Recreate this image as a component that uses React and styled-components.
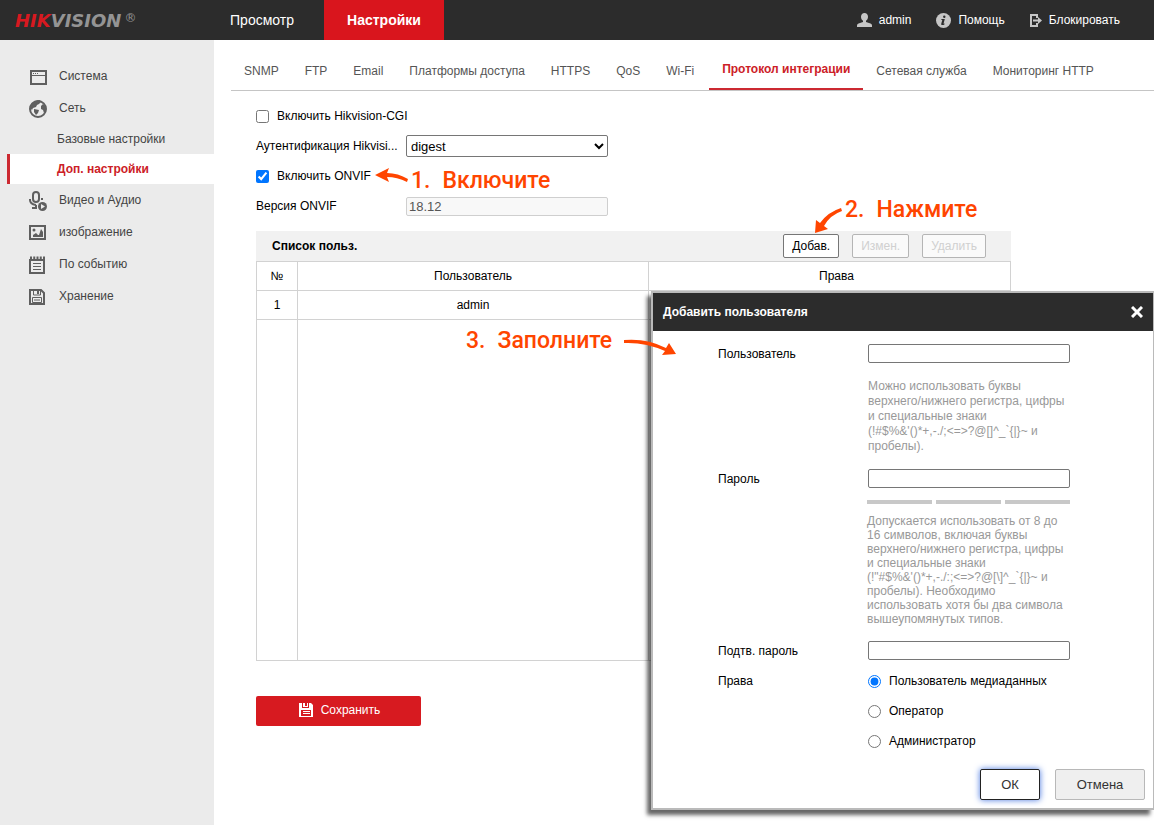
import React, { useState } from 'react'
import styled, { createGlobalStyle } from 'styled-components'

const GlobalStyle = createGlobalStyle`
    * {
        box-sizing: border-box;
    }
    body {
        margin: 0;
        background-color: white;
        color: black;
        font-family: "Liberation Sans", Arial, sans-serif;
        font-size: 12px;
    }
    a {
        color: inherit;
        text-decoration: none;
    }
    button, input, select {
        font-family: inherit;
        margin: 0;
    }
`

const Page = styled.div`
    position: relative;
    min-height: 100vh;
    display: flex;
    flex-direction: column;
    overflow: hidden;
`
const Header = styled.header`
    display: flex;
    height: 40px;
    background-color: #2c2c2c;
    color: white;
`
const Logo = styled.a`
    display: flex;
    align-items: center;
    width: 200px;
    padding-left: 15px;
    font-family: "DejaVu Sans", sans-serif;
    font-size: 18px;
    font-weight: bold;
    font-style: italic;
    color: #949494;
`
const LogoRed = styled.span`
    color: #d71920;
`
const LogoMark = styled.span`
    margin: 0 0 4px 3px;
    font-size: 12px;
    font-weight: normal;
    font-style: normal;
`
const MainNav = styled.nav`
    display: flex;
    flex: 1;
`
const MainLink = styled.a`
    display: flex;
    align-items: center;
    justify-content: center;
    width: ${props => props.$active ? '120px' : '124px'};
    font-size: 14px;
    font-weight: ${props => props.$active ? 'bold' : 'normal'};
    background-color: ${props => props.$active ? '#d9151d' : 'transparent'};
`
const UserLinks = styled.div`
    display: flex;
    align-items: center;
    gap: 25px;
    padding-right: 34px;
`
const UserLink = styled.a`
    display: flex;
    align-items: center;
    gap: 7px;
`
const Columns = styled.div`
    display: flex;
    flex: 1;
`
const Sidebar = styled.nav`
    flex: 0 0 214px;
    padding-top: 20px;
    background-color: #ebebeb;
    color: #444;
`
const SideLink = styled.a`
    display: flex;
    align-items: center;
    gap: 12px;
    height: 32px;
    padding-left: 29px;
`
const SubLink = styled.a`
    display: flex;
    align-items: center;
    height: 30px;
    margin-left: 7px;
    padding-left: 47px;
    border-left: 3px solid ${props => props.$active ? '#cc2931' : 'transparent'};
    background-color: ${props => props.$active ? 'white' : 'transparent'};
    color: ${props => props.$active ? '#cc2027' : 'inherit'};
    font-weight: ${props => props.$active ? 'bold' : 'normal'};
`
const Content = styled.main`
    flex: 1;
    min-width: 0;
    padding-left: 17px;
`
const Tabs = styled.nav`
    display: flex;
    height: 51px;
    border-bottom: 1px solid #c5c5c5;
    color: #555;
    white-space: nowrap;
`
const Tab = styled.a`
    display: flex;
    align-items: center;
    margin-left: ${props => props.$active ? '2px' : '0'};
    padding: ${props => props.$active ? '10px' : '12px'} 13px 0 13px;
    border-bottom: ${props => props.$active ? '2px solid #cc2931' : 'none'};
    color: ${props => props.$active ? '#cc2027' : 'inherit'};
    font-weight: ${props => props.$active ? 'bold' : 'normal'};
`
const Panel = styled.div`
    max-width: 780px;
    padding: 10px 0 0 25px;
`
const FormRow = styled.div`
    display: flex;
    align-items: center;
    height: 30px;
`
const CheckLabel = styled.label`
    display: flex;
    align-items: center;
    gap: 8px;
`
const Check = styled.input`
    width: 13px;
    height: 13px;
`
const FieldLabel = styled.label`
    width: 150px;
    white-space: nowrap;
`
const Select = styled.select`
    width: 202px;
    height: 22px;
    border: 1px solid #767676;
    border-radius: 2px;
    background-color: white;
    font-size: 13px;
`
const TextInput = styled.input`
    width: 202px;
    height: 19px;
    padding: 0 2px;
    border: 1px solid #767676;
    border-radius: 2px;
    font-size: 13px;

    &:disabled{
        border-color: #cfcfcf;
        background-color: #f8f8f8;
        color: #555;
    }
`
const ListHeader = styled.div`
    display: flex;
    align-items: center;
    height: 30px;
    margin-top: 10px;
    padding: 0 25px 0 16px;
    background-color: #f1f1f1;
`
const ListTitle = styled.h2`
    flex: 1;
    margin: 0;
    font-size: 12px;
`
const ListButton = styled.button`
    height: 24px;
    margin-left: 13px;
    padding: 0 8px;
    border: 1px solid #767676;
    border-radius: 2px;
    background-color: white;
    color: black;
    font-size: 12px;

    &:disabled{
        border-color: #b5b5b5;
        background-color: #fafafa;
        color: #d0d0d0;
    }
`
const Table = styled.table`
    width: 100%;
    table-layout: fixed;
    border-collapse: collapse;
`
const Cell = styled.td`
    height: ${props => props.$tall ? '341px' : '29px'};
    padding: 0 0 0 ${props => props.$last ? '14px' : '0'};
    border: 1px solid #d2d2d2;
    text-align: center;
    font-weight: normal;
`
const SaveButton = styled.button`
    display: flex;
    align-items: center;
    justify-content: center;
    gap: 8px;
    width: 165px;
    height: 30px;
    margin-top: 35px;
    padding: 0 0 2px 2px;
    border: none;
    border-radius: 2px;
    background-color: #d71a20;
    color: white;
    font-size: 12px;
`
const Dialog = styled.form`
    position: absolute;
    top: 291px;
    right: 0;
    width: 503px;
    border: 2px solid #bababa;
    border-right-width: 1px;
    background-color: white;
    box-shadow: -4px 5px 4px rgba(0, 0, 0, 0.6);
`
const DialogHeader = styled.div`
    display: flex;
    align-items: center;
    justify-content: space-between;
    height: 38px;
    padding: 0 10px;
    background-color: #2c2c2c;
    color: white;
`
const DialogTitle = styled.h2`
    margin: 0;
    font-size: 12px;
    line-height: 16px;
`
const CloseButton = styled.button`
    display: flex;
    padding: 0;
    border: none;
    background: none;
    color: white;
`
const DialogBody = styled.div`
    padding: 13px 0 0 65px;
`
const DialogRow = styled.div`
    display: grid;
    grid-template-columns: 150px 202px;
    margin-bottom: ${props => props.$gap || 0}px;
`
const DialogLabel = styled.label`
    line-height: 21px;
`
const Hint = styled.p`
    margin: ${props => props.$wide ? '10px 0 0 -1px' : '16px 0 0 0'};
    color: #999;
    line-height: ${props => props.$wide ? '14px' : '15px'};
    white-space: pre-line;
`
const Strength = styled.div`
    display: flex;
    gap: 4px;
    margin: 12px 0 0 -1px;
`
const StrengthBar = styled.span`
    flex: 1;
    height: 4px;
    background-color: #c8c8c8;
`
const RadioLabel = styled.label`
    display: flex;
    align-items: center;
    gap: 8px;
    height: 20px;
    margin-bottom: 10px;
`
const DialogFooter = styled.div`
    display: flex;
    justify-content: flex-end;
    gap: 15px;
    padding: 8px 8px 8px 0;
`
const DialogButton = styled.button`
    width: ${props => props.$primary ? '60px' : '90px'};
    height: 31px;
    border: 1px solid ${props => props.$primary ? '#222' : '#b8b8b8'};
    border-radius: 2px;
    background-color: ${props => props.$primary ? 'white' : '#efefef'};
    box-shadow: ${props => props.$primary ? '0 0 6px #4a78e0' : 'none'};
    color: #333;
    font-size: 13px;
`
// hand-written steps, lie over the page and the dialog
const Note = styled.div`
    position: absolute;
    left: ${props => props.$left}px;
    top: ${props => props.$top}px;
    display: flex;
    gap: 12px;
    color: #ff4500;
    font-family: Roboto, sans-serif;
    font-size: 23px;
    font-weight: 500;
    line-height: 32px;
    white-space: nowrap;
    pointer-events: none;
`
const Arrow = styled.svg`
    position: absolute;
    left: ${props => props.$left}px;
    top: ${props => props.$top}px;
    fill: #ff4500;
    pointer-events: none;
`

const SideIcon = ({ children }) => (
    <svg width="18" height="22" viewBox="0 -2 18 22" fill="none" stroke="#5f5f5f" strokeWidth="2">{children}</svg>
)

const SystemIcon = () => (
    <SideIcon>
        <path d="M2 4h15v13H2z" />
        <path d="M2 8.5h15" strokeWidth="1" />
        <path d="M4 6.5h6" strokeWidth="1" strokeDasharray="1 1" />
    </SideIcon>
)
const NetworkIcon = () => (
    <SideIcon>
        <circle cx="9" cy="10" r="8" />
        <path d="M1 9l1-4 4-3 5-1 1 2-2 2-2 1-1 2-3 1-1 2zM5 10l5 1-1 3-2 2-2-3zM12 7l2-2 3 3v4l-2 2-1-3-2-1z" fill="#5f5f5f" stroke="none" />
    </SideIcon>
)
const VideoIcon = () => (
    <SideIcon>
        <rect x="4" y="1" width="6" height="10" rx="3" />
        <path d="M1 8v1q0 4 6 5M3 17h5M12 8h2" />
        <path d="M7 14v3" />
        <circle cx="13.5" cy="15.5" r="4.5" fill="#5f5f5f" stroke="none" />
        <path d="M12 13v5l4-2.5z" fill="#ebebeb" stroke="none" />
    </SideIcon>
)
const ImageIcon = () => (
    <SideIcon>
        <path d="M1 3h15v13H1z" />
        <path d="M4 14v-2l3-2 2 2h1l2-6 2 3v5z" fill="#5f5f5f" stroke="none" />
        <circle cx="5" cy="7" r="1.500" fill="#5f5f5f" stroke="none" />
    </SideIcon>
)
const EventIcon = () => (
    <SideIcon>
        <path d="M1 5h14v13H1z" />
        <path d="M1 3h15" strokeDasharray="2 1.250" strokeWidth="3" />
        <path d="M4 8.500h8M4 11.500h8M4 14.500h8" strokeWidth="1" />
    </SideIcon>
)
const StorageIcon = () => (
    <SideIcon>
        <path d="M1 3h11l3 3v11H1z" />
        <path d="M4.500 3v5h7V3" strokeWidth="1" />
        <path d="M8 4h2v3H8z" fill="#5f5f5f" stroke="none" />
        <path d="M3.500 10.500h9v5h-9zM5 13h6" strokeWidth="1" />
    </SideIcon>
)
const UserIcon = () => (
    <svg width="15" height="14" viewBox="0 0 15 14" fill="#c6c6c6">
        <path d="M7.500 0C5.500 0 4 1.500 4 3.700c0 1.900.8 3.300 2 4v1.200L1.500 10.500Q0 11 0 12.500V14h15v-1.500q0-1.500-1.500-2L9 8.900V7.700c1.200-.7 2-2.100 2-4C11 1.500 9.500 0 7.500 0z" />
    </svg>
)
const HelpIcon = () => (
    <svg width="15" height="15" viewBox="0 0 15 15" fill="#2c2c2c">
        <circle cx="7.500" cy="7.500" r="7.500" fill="#c6c6c6" />
        <circle cx="8.300" cy="3.700" r="1.200" />
        <path d="M5.500 6h3.300l-1.300 4.800 1.200-.4-.3 1q-1.500 1-2.700.6-.8-.3-.4-1.500l1-3.500-1 .1z" />
    </svg>
)
const LockIcon = () => (
    <svg width="12" height="13" viewBox="0 0 12 13" fill="none" stroke="#c6c6c6" strokeWidth="2">
        <path d="M7 4V1H1v11h6V9" />
        <path d="M3 6.500H9" />
        <path d="M8 3l4 3.500L8 10z" fill="#c6c6c6" stroke="none" />
    </svg>
)
const SaveIcon = () => (
    <svg width="14" height="14" viewBox="0 0 14 14">
        <path d="M0 0h12l2 2v12H0z" fill="white" />
        <path d="M3 0h7v5H3zM2 7h10v6H2z" fill="#d71a20" />
        <path d="M4 0h2v4H4zM6 3h3v1H6zM8 0h1v4H8zM4 8h7v1H4zM4 10h7v1H4z" fill="white" />
    </svg>
)
const CloseIcon = () => (
    <svg width="12" height="12" viewBox="0 0 12 12" stroke="currentColor" strokeWidth="3">
        <path d="M1 1l10 10M11 1L1 11" />
    </svg>
)

const tabs = ['SNMP', 'FTP', 'Email', 'Платформы доступа', 'HTTPS', 'QoS', 'Wi-Fi', 'Протокол интеграции', 'Сетевая служба', 'Мониторинг HTTP']
const roles = ['Пользователь медиаданных', 'Оператор', 'Администратор']

const AddUserDialog = () => {
    const [role, setRole] = useState(roles[0])
    return (
        <Dialog role="dialog" aria-labelledby="dialog-title" onSubmit={e => e.preventDefault()}>
            <DialogHeader>
                <DialogTitle id="dialog-title">Добавить пользователя</DialogTitle>
                <CloseButton type="button" aria-label="Закрыть"><CloseIcon /></CloseButton>
            </DialogHeader>
            <DialogBody>
                <DialogRow $gap={15}>
                    <DialogLabel htmlFor="user">Пользователь</DialogLabel>
                    <div>
                        <TextInput id="user" type="text" />
                        <Hint>{"Можно использовать буквы верхнего/нижнего регистра, цифры и специальные знаки\n(!#$%&'()*+,-./;<=>?@[]^_`{|}~ и пробелы)."}</Hint>
                    </div>
                </DialogRow>
                <DialogRow $gap={15}>
                    <DialogLabel htmlFor="password">Пароль</DialogLabel>
                    <div>
                        <TextInput id="password" type="password" />
                        <Strength>
                            <StrengthBar />
                            <StrengthBar />
                            <StrengthBar />
                        </Strength>
                        <Hint $wide>{"Допускается использовать от 8 до 16 символов, включая буквы верхнего/нижнего регистра, цифры и специальные знаки\n(!\"#$%&'()*+,-./:;<=>?@[\\]^_`{|}~ и пробелы). Необходимо использовать хотя бы два символа вышеупомянутых типов."}</Hint>
                    </div>
                </DialogRow>
                <DialogRow $gap={9}>
                    <DialogLabel htmlFor="confirm">Подтв. пароль</DialogLabel>
                    <TextInput id="confirm" type="password" />
                </DialogRow>
                <DialogRow role="radiogroup" aria-labelledby="rights">
                    <DialogLabel as="span" id="rights">Права</DialogLabel>
                    <div>
                        {roles.map(item => (
                            <RadioLabel key={item}>
                                <Check type="radio" name="role" checked={role === item} onChange={() => setRole(item)} />
                                {item}
                            </RadioLabel>
                        ))}
                    </div>
                </DialogRow>
            </DialogBody>
            <DialogFooter>
                <DialogButton $primary type="submit">ОК</DialogButton>
                <DialogButton type="button">Отмена</DialogButton>
            </DialogFooter>
        </Dialog>
    )
}

const App = () => {
    return (
        <Page>
            <GlobalStyle />
            <Header>
                <Logo href="#"><LogoRed>HIK</LogoRed>VISION<LogoMark>®</LogoMark></Logo>
                <MainNav>
                    <MainLink href="#">Просмотр</MainLink>
                    <MainLink href="#" $active>Настройки</MainLink>
                </MainNav>
                <UserLinks>
                    <UserLink href="#"><UserIcon />admin</UserLink>
                    <UserLink href="#"><HelpIcon />Помощь</UserLink>
                    <UserLink href="#"><LockIcon />Блокировать</UserLink>
                </UserLinks>
            </Header>
            <Columns>
                <Sidebar>
                    <SideLink href="#"><SystemIcon />Система</SideLink>
                    <SideLink href="#"><NetworkIcon />Сеть</SideLink>
                    <SubLink href="#">Базовые настройки</SubLink>
                    <SubLink href="#" $active>Доп. настройки</SubLink>
                    <SideLink href="#"><VideoIcon />Видео и Аудио</SideLink>
                    <SideLink href="#"><ImageIcon />изображение</SideLink>
                    <SideLink href="#"><EventIcon />По событию</SideLink>
                    <SideLink href="#"><StorageIcon />Хранение</SideLink>
                </Sidebar>
                <Content>
                    <Tabs>
                        {tabs.map(item => (
                            <Tab href="#" key={item} $active={item === 'Протокол интеграции'}>{item}</Tab>
                        ))}
                    </Tabs>
                    <Panel>
                        <FormRow>
                            <CheckLabel><Check type="checkbox" />Включить Hikvision-CGI</CheckLabel>
                        </FormRow>
                        <FormRow>
                            <FieldLabel htmlFor="auth">Аутентификация Hikvisi...</FieldLabel>
                            <Select id="auth"><option>digest</option></Select>
                        </FormRow>
                        <FormRow>
                            <CheckLabel><Check type="checkbox" defaultChecked />Включить ONVIF</CheckLabel>
                        </FormRow>
                        <FormRow>
                            <FieldLabel htmlFor="version">Версия ONVIF</FieldLabel>
                            <TextInput id="version" type="text" defaultValue="18.12" disabled />
                        </FormRow>
                        <ListHeader>
                            <ListTitle>Список польз.</ListTitle>
                            <ListButton>Добав.</ListButton>
                            <ListButton disabled>Измен.</ListButton>
                            <ListButton disabled>Удалить</ListButton>
                        </ListHeader>
                        <Table>
                            <colgroup>
                                <col width="41" />
                                <col width="351" />
                                <col />
                            </colgroup>
                            <thead>
                                <tr>
                                    <Cell as="th">№</Cell>
                                    <Cell as="th">Пользователь</Cell>
                                    <Cell as="th" $last>Права</Cell>
                                </tr>
                            </thead>
                            <tbody>
                                <tr>
                                    <Cell>1</Cell>
                                    <Cell>admin</Cell>
                                    <Cell />
                                </tr>
                                <tr>
                                    <Cell $tall />
                                    <Cell $tall />
                                    <Cell $tall />
                                </tr>
                            </tbody>
                        </Table>
                        <SaveButton><SaveIcon />Сохранить</SaveButton>
                    </Panel>
                </Content>
            </Columns>
            <AddUserDialog />
            <Note $left={411} $top={165}><span>1.</span><span>Включите</span></Note>
            <Note $left={845} $top={194}><span>2.</span><span>Нажмите</span></Note>
            <Note $left={466} $top={325}><span>3.</span><span>Заполните</span></Note>
            <Arrow $left={375} $top={168} width="34" height="16">
                <path d="M0 7L14 0l-2 5q11 0 21 6l-1 3q-10-5-20-5l2 5z" />
            </Arrow>
            <Arrow $left={815} $top={207} width="28" height="27">
                <path d="M0 26L1 13l4 3Q13 5 26 1l1 3Q15 8 9 19l4 3z" />
            </Arrow>
            <Arrow $left={623} $top={338} width="54" height="18">
                <path d="M1 2q23-2 42 8l3-5 7 11-14 1 3-4Q22 4 1 5z" />
            </Arrow>
        </Page>
    )
}

export default App
